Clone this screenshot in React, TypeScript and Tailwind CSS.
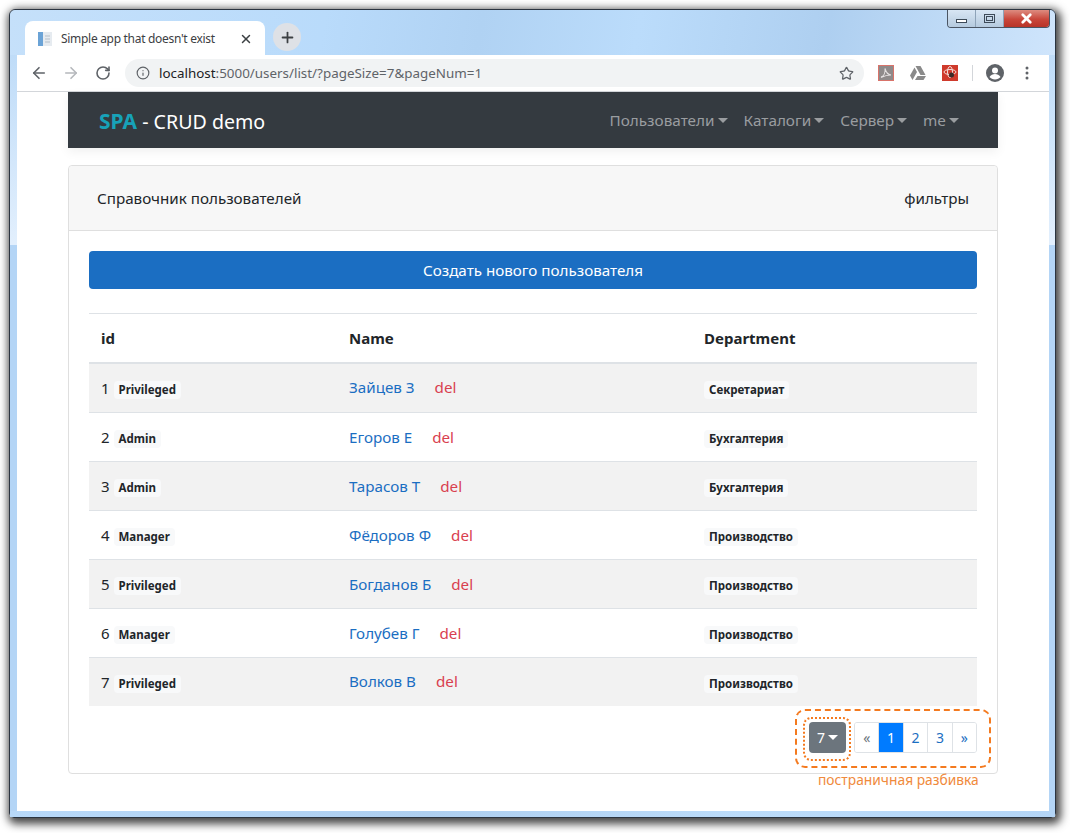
import { ArrowLeft, ArrowRight, RotateCw, Info, Star, X, Plus } from "lucide-react";

const font = { fontFamily: '"Noto Sans", "Open Sans", sans-serif' };

const users = [
  { id: 1, role: "Privileged", name: "Зайцев З", dept: "Секретариат" },
  { id: 2, role: "Admin", name: "Егоров Е", dept: "Бухгалтерия" },
  { id: 3, role: "Admin", name: "Тарасов Т", dept: "Бухгалтерия" },
  { id: 4, role: "Manager", name: "Фёдоров Ф", dept: "Производство" },
  { id: 5, role: "Privileged", name: "Богданов Б", dept: "Производство" },
  { id: 6, role: "Manager", name: "Голубев Г", dept: "Производство" },
  { id: 7, role: "Privileged", name: "Волков В", dept: "Производство" },
];

function Caret({ color = "border-t-[#9a9da0]" }: { color?: string }) {
  return (
    <span className={`inline-block ml-[3px] w-0 h-0 border-x-[5px] border-x-transparent border-t-[5px] align-[3px] ${color}`} />
  );
}

function Badge({ text }: { text: string }) {
  return (
    <span className="inline-block bg-[#f8f9fa] rounded-[4px] px-[5px] h-[18px] leading-[18px] text-[11.5px] font-bold text-[#212529]">
      {text}
    </span>
  );
}

function NavItem({ text }: { text: string }) {
  return (
    <span className="text-[15.3px] text-[#9a9da0] whitespace-nowrap">
      {text}
      <Caret />
    </span>
  );
}

function PageLink({ text, active, muted }: { text: string; active?: boolean; muted?: boolean }) {
  let cls = "bg-white text-[#1b6ec2]";
  if (active) cls = "bg-[#007bff] text-white";
  if (muted) cls = "bg-white text-[#6c757d]";
  return (
    <span className={`flex-1 flex items-center justify-center border-l border-[#dee2e6] first:border-l-0 text-[14px] ${cls}`}>
      {text}
    </span>
  );
}

export default function App() {
  return (
    <div className="w-[1070px] h-[833px] bg-white overflow-hidden pt-[9px] pl-[9px]" style={font}>
      <div className="w-[1047px] h-[809px] rounded-t-[6px] rounded-b-[5px] border border-[#2b3440] bg-[linear-gradient(#bfdcf8_45px,#e2effd_232px,#e2effd_235px,#b4d5f6_235px)] shadow-[2px_3px_8px_3px_rgba(0,0,0,0.72)] flex flex-col">
        <div className="h-[45px] flex items-start pl-[15px] pr-[6px] rounded-t-[6px] bg-[linear-gradient(100deg,#c5e0fa_0%,#b9dbfb_30%,#b0d2f3_45%,#bbdcfb_60%,#aecff0_78%,#cfe5fc_100%)]">
          <div className="mt-[11px] w-[240px] h-[35px] bg-white rounded-t-[8px] flex items-center pl-[12px] pr-[12px]">
            <svg width="16" height="16" viewBox="0 0 16 16" className="mr-[8px]">
              <rect x="1" y="1" width="5" height="14" fill="#6ba3d6" />
              <rect x="6" y="1" width="9" height="14" fill="#e6ebf0" />
              <path d="M8 5h5M8 8h5M8 11h5" stroke="#b5bfc9" strokeWidth="1" />
            </svg>
            <span className="text-[12px] tracking-[-0.3px] text-[#3c4043] flex-1 whitespace-nowrap">Simple app that doesn't exist</span>
            <X size={14} strokeWidth={2.5} className="text-[#3c4043]" />
          </div>
          <div className="mt-[13px] ml-[8px] w-[28px] h-[28px] rounded-full bg-[#dee1e6] flex items-center justify-center">
            <Plus size={17} strokeWidth={2.5} className="text-[#3c4043]" />
          </div>
          <div className="ml-auto mr-[-1px] flex h-[18px] w-[103px] rounded-b-[4px] border border-t-0 border-[#4a5563] overflow-hidden">
            <div className="w-[28px] bg-[linear-gradient(#d8e6f4,#b5cade)] border-r border-[#8ea3b8] flex items-center justify-center">
              <div className="w-[11px] h-[4px] mt-[4px] border border-[#3d4a58] bg-white" />
            </div>
            <div className="w-[28px] bg-[linear-gradient(#d8e6f4,#b5cade)] border-r border-[#8ea3b8] flex items-center justify-center">
              <div className="w-[11px] h-[9px] border border-[#3d4a58] p-[1px]">
                <div className="w-full h-full border border-[#3d4a58]" />
              </div>
            </div>
            <div className="flex-1 bg-[linear-gradient(#dd8c80,#c9463a_55%,#b83428)] flex items-center justify-center">
              <X size={15} strokeWidth={4.5} className="text-white" />
            </div>
          </div>
        </div>

        <div className="ml-[7px] mr-[6px] h-[37px] bg-white flex items-center border-b border-[#d3d6da] pl-[13px]">
          <ArrowLeft size={18} strokeWidth={2.2} className="text-[#5f6368] shrink-0" />
          <ArrowRight size={18} strokeWidth={2.2} className="text-[#b5b8bc] ml-[14px] shrink-0" />
          <RotateCw size={16} strokeWidth={2.4} className="text-[#5f6368] ml-[15px] shrink-0" />
          <div className="ml-[14px] w-[739px] shrink-0 h-[28px] rounded-full bg-[#f1f3f4] flex items-center pl-[11px] pr-[10px]">
            <Info size={14} className="text-[#5f6368]" />
            <span className="ml-[9px] text-[13.4px] text-[#5f6368] flex-1 whitespace-nowrap">
              <span className="text-[#202124]">localhost</span>:5000/users/list/?pageSize=7&pageNum=1
            </span>
            <Star size={15} strokeWidth={2} className="text-[#5f6368]" />
          </div>
          <svg width="16" height="16" viewBox="0 0 16 16" className="ml-[14px] shrink-0">
            <rect x="0.5" y="0.500" width="15" height="15" fill="#8f8a8a" stroke="#d8736a" />
            <path d="M3 12.500c3-1.500 4.500-5.500 4-9 1 4 3 6 6 6.500-3 0-6 .5-10 2.500z" fill="none" stroke="#e4e0e0" strokeWidth="1.100" />
          </svg>
          <svg width="16" height="14" viewBox="0 0 16 14" className="ml-[16px] shrink-0">
            <path d="M5.500 0h5l5 9h-5zM4.500 1.500 0 9.500 2.500 14 7 6zM5 14h8.500l2.500-4H7.500z" fill="#8a8a8a" />
          </svg>
          <svg width="16" height="16" viewBox="0 0 16 16" className="ml-[16px] shrink-0">
            <rect width="16" height="16" fill="#cf3a2c" />
            <ellipse cx="8" cy="7" rx="6" ry="2.500" fill="none" stroke="#f5dcd8" strokeWidth="1" />
            <ellipse cx="8" cy="7" rx="2.500" ry="5.500" fill="none" stroke="#f5dcd8" strokeWidth="1" />
            <circle cx="9.500" cy="10" r="2.500" fill="#3a2a28" />
          </svg>
          <div className="ml-[14px] w-px h-[16px] bg-[#d3d6da] shrink-0" />
          <svg width="18" height="18" viewBox="0 0 18 18" className="ml-[13px] shrink-0">
            <circle cx="9" cy="9" r="9" fill="#5f6368" />
            <circle cx="9" cy="6.500" r="3" fill="#fff" />
            <path d="M3.500 13c1-2 3.500-3 5.500-3s4.500 1 5.500 3c-1.300 1.600-3.300 2.500-5.500 2.500s-4.200-.9-5.500-2.500z" fill="#fff" />
          </svg>
          <svg width="4" height="14" viewBox="0 0 4 14" className="ml-[21px] shrink-0">
            <circle cx="2" cy="2" r="1.500" fill="#5f6368" />
            <circle cx="2" cy="7" r="1.500" fill="#5f6368" />
            <circle cx="2" cy="12" r="1.500" fill="#5f6368" />
          </svg>
        </div>

        <div className="ml-[7px] mr-[6px] flex-1 bg-white pl-[51px] pr-[51px]">
          <div className="h-[56px] bg-[#343a40] flex items-center pl-[31px] pr-[39px] shadow-[0_4px_10px_rgba(0,0,0,0.06)]">
            <span className="text-[19.6px] text-white leading-[28px] mt-[2px]">
              <b className="text-[#17a2b8] font-bold text-[21px]">SPA</b> - CRUD demo
            </span>
            <div className="ml-auto flex gap-[16px] mt-[1px]">
              <NavItem text="Пользователи" />
              <NavItem text="Каталоги" />
              <NavItem text="Сервер" />
              <NavItem text="me" />
            </div>
          </div>

          <div className="mt-[17px] h-[609px] border border-[#dfdfdf] rounded-[4px] flex flex-col relative">
            <div className="h-[65px] bg-[#f7f7f7] border-b border-[#dfdfdf] rounded-t-[4px] flex items-center justify-between pl-[28px] pr-[28px] pt-[1px] text-[15.2px] text-[#212529]">
              <span>Справочник пользователей</span>
              <span>фильтры</span>
            </div>

            <div className="px-[20px] pt-[20px]">
              <div className="h-[38px] rounded-[4px] bg-[#1b6ec2] text-white text-[15.2px] flex items-center justify-center">
                Создать нового пользователя
              </div>

              <table className="mt-[24px] w-[888px] table-fixed border-t border-[#dee2e6] text-[#212529]">
                <colgroup>
                  <col className="w-[248px]" />
                  <col className="w-[355px]" />
                  <col className="w-[285px]" />
                </colgroup>
                <thead>
                  <tr className="h-[49px] border-b-2 border-[#dee2e6] text-[15px] font-bold text-left">
                    <th className="pl-[12px]">id</th>
                    <th className="pl-[12px]">Name</th>
                    <th className="pl-[12px]">Department</th>
                  </tr>
                </thead>
                <tbody>
                  {users.map((u, i) => (
                    <tr
                      key={u.id}
                      className={`border-t border-[#dee2e6] first:border-t-0 first:h-[50px] last:h-[48px] h-[49px] ${i % 2 === 0 ? "bg-[#f2f2f2]" : "bg-white"}`}
                    >
                      <td className="pl-[12px] text-[15px]">
                        {u.id} <Badge text={u.role} />
                      </td>
                      <td className="pl-[12px] text-[15.2px]">
                        <span className="text-[#1b6ec2]">{u.name}</span>
                        <span className="ml-[20px] text-[#d9404f]">del</span>
                      </td>
                      <td className="pl-[12px]">
                        <Badge text={u.dept} />
                      </td>
                    </tr>
                  ))}
                </tbody>
              </table>

              <div className="mt-[16px] flex justify-end items-stretch h-[31px]">
                <div className="w-[37px] rounded-[4px] bg-[#6c757d] text-white text-[14px] flex items-center justify-center">
                  7<Caret color="border-t-white" />
                </div>
                <div className="ml-[8px] w-[123px] flex border border-[#dee2e6] rounded-[3px] overflow-hidden">
                  <PageLink text="«" muted />
                  <PageLink text="1" active />
                  <PageLink text="2" />
                  <PageLink text="3" />
                  <PageLink text="»" />
                </div>
              </div>
            </div>

            <div className="absolute left-[726px] top-[543px] w-[196px] h-[59px] rounded-[10px] border-2 border-dashed border-[#f47a1f] pointer-events-none" />
            <div className="absolute left-[734px] top-[551px] w-[48px] h-[44px] rounded-[8px] border-2 border-dotted border-[#f47a1f] pointer-events-none" />
            <div className="absolute left-[749px] top-[604px] text-[13.8px] text-[#f08a3c] whitespace-nowrap">
              постраничная разбивка
            </div>
          </div>
        </div>

        <div className="h-[6px] bg-[linear-gradient(90deg,#b8d9f9_0%,#aecff0_40%,#bcdcfa_70%,#b4d5f6_100%)]" />
      </div>
    </div>
  );
}
